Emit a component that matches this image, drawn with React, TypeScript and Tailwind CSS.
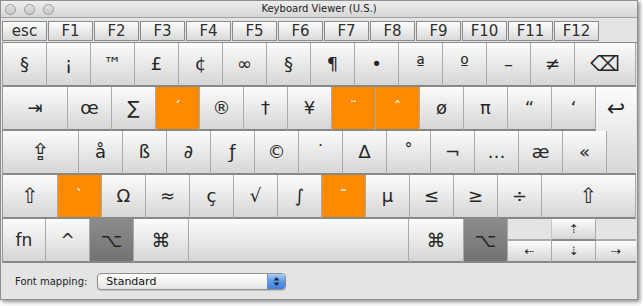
import React from 'react';

type Variant = 'plain' | 'orange' | 'dark';

interface KeyProps {
  label?: React.ReactNode;
  width: string;
  variant?: Variant;
  text?: string;
  className?: string;
}

const VARIANTS: Record<Variant, string> = {
  plain: 'bg-linear-to-b from-[#fcfcfc] to-[#d6d6d6] text-[#262626]',
  orange: 'bg-[#ff8a00] text-white',
  dark: 'bg-linear-to-b from-[#8c8c8c] to-[#737373] text-[#262626]',
};

const FONT = 'font-["Lucida_Grande","DejaVu_Sans",sans-serif]';

const Key: React.FC<KeyProps> = ({ label, width, variant = 'plain', text = 'text-[18px]', className = '' }) => (
  <div
    className={`flex h-[44px] shrink-0 items-center justify-center border-r border-b-2 border-r-[#a9a9a9] border-b-[#888888] leading-none ${width} ${VARIANTS[variant]} ${text} ${className}`}
  >
    {label}
  </div>
);

const FKEYS = ['F1', 'F2', 'F3', 'F4', 'F5', 'F6', 'F7', 'F8', 'F9', 'F10', 'F11', 'F12'];

const ROW1 = ['§', '¡', '™', '£', '¢', '∞', '§', '¶', '•', 'ª', 'º', '–', '≠'];

// orange = dead keys (accents waiting for a second key)
const ROW2: { k: string; dead?: boolean }[] = [
  { k: 'œ' }, { k: '∑' }, { k: '´', dead: true }, { k: '®' }, { k: '†' }, { k: '¥' },
  { k: '¨', dead: true }, { k: 'ˆ', dead: true }, { k: 'ø' }, { k: 'π' }, { k: '“' }, { k: '‘' },
];

const ROW3 = ['å', 'ß', '∂', 'ƒ', '©', '˙', '∆', '˚', '¬', '…', 'æ', '«'];

const ROW4: { k: string; dead?: boolean }[] = [
  { k: '`', dead: true }, { k: 'Ω' }, { k: '≈' }, { k: 'ç' }, { k: '√' }, { k: '∫' },
  { k: '˜', dead: true }, { k: 'µ' }, { k: '≤' }, { k: '≥' }, { k: '÷' },
];

const TrafficLight = () => (
  <div className="h-[11px] w-[11px] rounded-full border border-[#9c9c9c] bg-linear-to-b from-[#e2e2e2] to-[#c9c9c9]" />
);

const ArrowKey: React.FC<{ label: string; width: string }> = ({ label, width }) => (
  <div
    className={`flex h-[22px] shrink-0 items-center justify-center border-r border-b-2 border-r-[#a9a9a9] border-b-[#888888] bg-linear-to-b from-[#fcfcfc] to-[#d6d6d6] text-[12px] leading-none text-[#262626] ${width}`}
  >
    {label}
  </div>
);

const ArrowBlank: React.FC<{ width: string }> = ({ width }) => (
  <div className={`h-[22px] shrink-0 border-r border-b-2 border-r-[#c6c6c6] border-b-[#a9a9a9] bg-[#e4e4e4] ${width}`} />
);

export default function App() {
  return (
    <div className={`h-[306px] w-[643px] overflow-hidden bg-white ${FONT}`}>
      <div className="flex h-[300px] w-[638px] flex-col border border-[#8f8f8f] bg-[#e4e4e4] shadow-[2px_2px_4px_rgba(0,0,0,0.45)]">
        {/* title bar */}
        <div className="grid h-[17px] shrink-0 grid-cols-[1fr_auto_1fr] items-center border-b border-b-[#a2a2a2] bg-linear-to-b from-[#eeeeee] to-[#d6d6d6]">
          <div className="flex items-center gap-[8px] pl-[4px]">
            <TrafficLight />
            <TrafficLight />
            <TrafficLight />
          </div>
          <div className="text-[10px] leading-none text-[#222]">Keyboard Viewer (U.S.)</div>
          <div />
        </div>

        {/* function row */}
        <div className="flex h-[24px] shrink-0 gap-[1px] pt-[3px] pl-[1px]">
          <div className="flex h-[20px] w-[45px] items-center justify-center border border-[#8a8a8a] bg-linear-to-b from-[#fdfdfd] to-[#d9d9d9] text-[15px] leading-none text-[#2e2e2e]">
            esc
          </div>
          {FKEYS.map((f) => (
            <div
              key={f}
              className="flex h-[20px] w-[45px] items-center justify-center border border-[#8a8a8a] bg-linear-to-b from-[#fdfdfd] to-[#d9d9d9] text-[15px] leading-none text-[#2e2e2e]"
            >
              {f}
            </div>
          ))}
        </div>

        {/* keyboard */}
        <div className="ml-[1px] flex flex-col border-t border-l border-t-[#8a8a8a] border-l-[#9a9a9a]">
          <div className="flex">
            {ROW1.map((k, i) => (
              <Key key={i} label={k} width="w-[44px]" />
            ))}
            <Key label="⌫" width="w-[61px]" text="text-[21px]" />
          </div>

          <div className="flex">
            <Key label="⇥" width="w-[65px]" text="text-[18px]" />
            {ROW2.map(({ k, dead }, i) =>
              dead ? (
                <Key key={i} label={k} width="w-[44px]" variant="orange" text="text-[15px]" />
              ) : (
                <Key key={i} label={k} width="w-[44px]" />
              ),
            )}
            <div className="flex h-[44px] w-[40px] shrink-0 items-center justify-center bg-linear-to-b from-[#fcfcfc] to-[#ebebeb] text-[22px] leading-none text-[#262626]">
              ↩
            </div>
          </div>

          <div className="flex">
            <Key label="⇪" width="w-[76px]" text="text-[23px]" />
            {ROW3.map((k, i) => (
              <Key key={i} label={k} width="w-[44px]" />
            ))}
            <div className="h-[44px] w-[29px] shrink-0 border-b-2 border-b-[#888888] bg-linear-to-b from-[#ebebeb] to-[#d6d6d6]" />
          </div>

          <div className="flex">
            <Key label="⇧" width="w-[55px]" text="text-[21px]" />
            {ROW4.map(({ k, dead }, i) =>
              dead ? (
                <Key key={i} label={k} width="w-[44px]" variant="orange" text="text-[15px]" />
              ) : (
                <Key key={i} label={k} width="w-[44px]" />
              ),
            )}
            <Key label="⇧" width="w-[94px]" text="text-[21px]" />
          </div>

          <div className="flex">
            <Key label="fn" width="w-[43px]" text="text-[17px]" />
            <Key label="^" width="w-[44px]" text="text-[17px]" />
            <Key label="⌥" width="w-[44px]" variant="dark" text="text-[19px]" />
            <Key label="⌘" width="w-[55px]" text="text-[19px]" />
            <Key width="w-[220px]" />
            <Key label="⌘" width="w-[55px]" text="text-[19px]" />
            <Key label="⌥" width="w-[44px]" variant="dark" text="text-[19px]" />
            <div className="flex flex-col">
              <div className="flex">
                <ArrowBlank width="w-[44px]" />
                <ArrowKey label="⇡" width="w-[44px]" />
                <div className="h-[22px] w-[40px] shrink-0 border-b-2 border-b-[#a9a9a9] bg-[#e4e4e4]" />
              </div>
              <div className="flex">
                <ArrowKey label="⇠" width="w-[44px]" />
                <ArrowKey label="⇣" width="w-[44px]" />
                <div className="flex h-[22px] w-[40px] shrink-0 items-center justify-center border-b-2 border-b-[#888888] bg-linear-to-b from-[#fcfcfc] to-[#d6d6d6] text-[12px] leading-none text-[#262626]">
                  ⇢
                </div>
              </div>
            </div>
          </div>
        </div>

        {/* footer */}
        <div className="flex flex-1 items-center pl-[14px]">
          <span className="text-[10px] text-[#222]">Font mapping:</span>
          <div className="ml-[10px] flex h-[17px] w-[189px] items-center overflow-hidden rounded-[4px] border border-[#8e8e8e] bg-linear-to-b from-white to-[#e6e6e6] shadow-[0_1px_1px_rgba(0,0,0,0.15)]">
            <span className="flex-1 pl-[8px] text-[11px] leading-none text-[#111]">Standard</span>
            <div className="flex h-full w-[18px] items-center justify-center border-l border-l-[#6a8fc4] bg-linear-to-b from-[#a9cdf7] via-[#5d98e6] to-[#3f80dc]">
              <svg width="7" height="11" viewBox="0 0 7 11">
                <path d="M3.5 1 L6.5 4.5 L0.5 4.5 Z" fill="#1b2a44" />
                <path d="M3.5 10 L6.5 6.5 L0.5 6.5 Z" fill="#1b2a44" />
              </svg>
            </div>
          </div>
        </div>
      </div>
    </div>
  );
}
